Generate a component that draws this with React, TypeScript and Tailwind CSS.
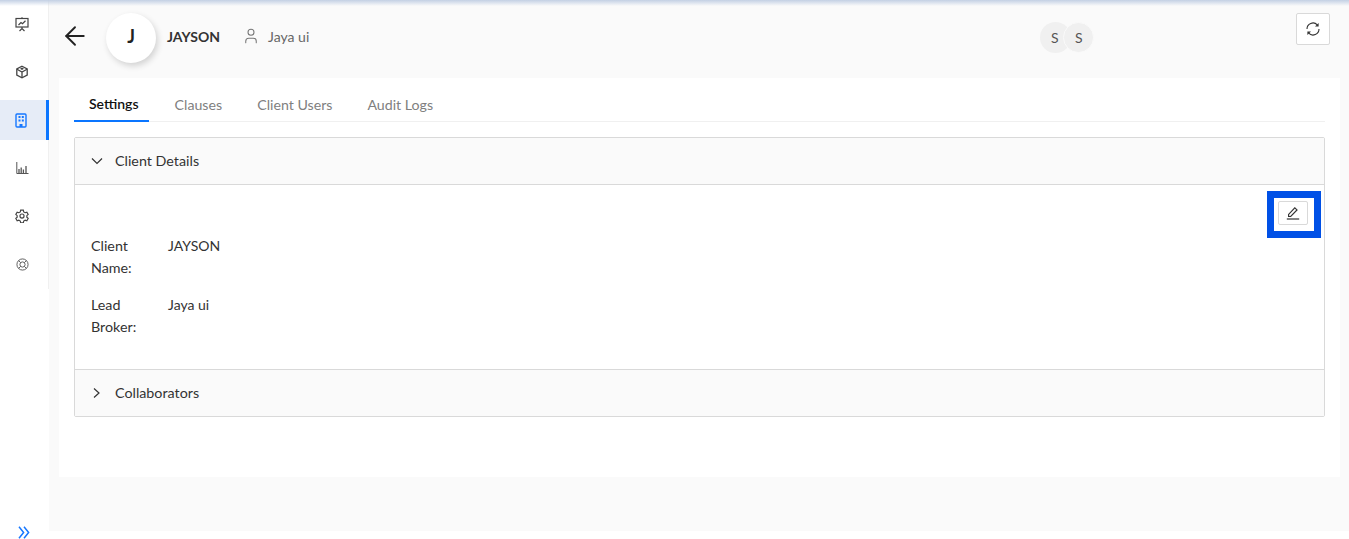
import React from "react";
import { ArrowLeft, User } from "lucide-react";

const PresentationIcon = () => (
  <svg width="14" height="15" viewBox="0 0 14 15" fill="none" stroke="#444" strokeWidth="1.2">
    <rect x="1" y="1.5" width="12" height="8.5" />
    <path d="M3.5 8 6 5.5l1.5 1.2L10.5 3.8" />
    <path d="M7 .2v1.3M7 10v1.5M4.5 14 7 11.5 9.5 14" />
  </svg>
);

const BoxIcon = () => (
  <svg width="14" height="14" viewBox="0 0 14 14" fill="none" stroke="#444" strokeWidth="1.3">
    <path d="M7 1.2 12.2 4v6L7 12.8 1.8 10V4Z" />
    <path d="M2 4.2 7 7l5-2.8M7 7v5.6" />
    <path d="M5 3.8 7 2.6l2 1.2L7 5Z" fill="#444" stroke="none" />
  </svg>
);

const BuildingIcon = () => (
  <svg width="12" height="15" viewBox="0 0 12 15" fill="none">
    <rect x="1" y="1" width="10" height="13" rx="1" stroke="#1677ff" strokeWidth="1.4" fill="#e6ecf7" />
    <path d="M3.5 3h2v2h-2zM6.8 3h2v2h-2zM3.5 6.5h2v2h-2zM6.8 6.5h2v2h-2zM4.5 14v-3h3v3z" fill="#1677ff" />
  </svg>
);

const ChartIcon = () => (
  <svg width="13" height="14" viewBox="0 0 13 14" fill="none" stroke="#555" strokeWidth="1">
    <path d="M.8 1v11.5h11.7" />
    <path d="M3 12V8M5.2 12V6.5M7.4 12V8.5M10 12V5" strokeWidth="1.3" />
  </svg>
);

const GearIcon = () => (
  <svg width="14" height="14" viewBox="0 0 24 24" fill="none" stroke="#444" strokeWidth="2">
    <path d="M9.7 2h4.6l.6 3 2.5 1.4 2.9-1 2.3 4-2.3 2v2.8l2.3 2-2.3 4-2.9-1-2.5 1.4-.6 3H9.7l-.6-3-2.5-1.4-2.9 1-2.3-4 2.3-2v-2.8l-2.3-2 2.3-4 2.9 1L9.1 5Z" />
    <circle cx="12" cy="12" r="3.5" />
  </svg>
);

const LifebuoyIcon = () => (
  <svg width="13" height="13" viewBox="0 0 14 14" fill="none" stroke="#555" strokeWidth="1">
    <circle cx="7" cy="7" r="6" />
    <circle cx="7" cy="7" r="2.8" />
    <path d="m2.8 2.8 2.2 2.2M9 9l2.2 2.2M11.2 2.8 9 5M5 9l-2.2 2.2" />
  </svg>
);

const navItems = [
  { icon: <PresentationIcon />, active: false },
  { icon: <BoxIcon />, active: false },
  { icon: <BuildingIcon />, active: true },
  { icon: <ChartIcon />, active: false },
  { icon: <GearIcon />, active: false },
  { icon: <LifebuoyIcon />, active: false },
];

const tabs = ["Settings", "Clauses", "Client Users", "Audit Logs"];

const details = [
  { label: "Client Name:", value: "JAYSON" },
  { label: "Lead Broker:", value: "Jaya ui" },
];

export default function App() {
  return (
    <div className="relative flex h-[539px] w-[1349px] overflow-hidden bg-white font-['Lato',sans-serif] text-[14.3px] text-[#333]">
      <div className="absolute inset-x-0 top-0 z-10 h-[6px] bg-gradient-to-b from-[#c3d0e4] to-transparent" />

      <aside className="flex w-[49px] shrink-0 flex-col">
        <div className="flex h-[289px] flex-col border-r border-[#f0f0f0] pt-[4px]">
          {navItems.map((item, i) => (
            <div
              key={i}
              className={`flex h-[40px] shrink-0 items-center justify-center [&:not(:first-child)]:mt-[8px] ${
                item.active ? "-mr-px border-r-[3px] border-[#0a75ff] bg-[#e6ecf7] pr-[5px]" : "pr-[4px]"
              }`}
            >
              {item.icon}
            </div>
          ))}
        </div>
        <div className="mt-auto flex justify-center pr-[1px]">
          <svg width="12" height="13" viewBox="0 0 12 13" fill="none" stroke="#1677ff" strokeWidth="1.5">
            <path d="M1 .8l4.6 5.7L1 12.2M6 .8l4.6 5.7L6 12.2" />
          </svg>
        </div>
      </aside>

      <main className="mb-[8px] flex h-[531px] flex-1 flex-col bg-[#fafafa] pl-[10px] pr-[9px]">
        <header className="flex h-[78px] shrink-0 items-center pb-[2px]">
          <ArrowLeft size={30} strokeWidth={1.5} className="mb-[4px] ml-[1px] text-[#222]" />
          <div className="ml-[16px] flex h-[50px] w-[50px] items-center justify-center rounded-full bg-white pb-[3px] text-[18px] font-bold text-[#222] shadow-[2px_3px_6px_rgba(0,0,0,0.16)]">
            J
          </div>
          <span className="mb-[4px] ml-[11px] text-[14px] font-bold text-[#333]">JAYSON</span>
          <User size={18} strokeWidth={1.4} className="mb-[4px] ml-[22px] text-[#777]" />
          <span className="mb-[4px] ml-[8px] text-[14px] text-[#666]">Jaya ui</span>
          <div className="mb-[1px] ml-[731px] flex">
            <span className="flex h-[31px] w-[31px] items-center justify-center rounded-full bg-[#f0f0f0] pr-[2px] text-[14px] text-[#555]">S</span>
            <span className="-ml-[8px] flex h-[31px] w-[31px] items-center justify-center rounded-full border border-[#fafafa] bg-[#f0f0f0] text-[14px] text-[#555]">S</span>
          </div>
          <button className="mb-[18px] ml-auto mr-[10px] flex h-[32px] w-[34px] items-center justify-center rounded-[2px] border border-[#d9d9d9] bg-white">
            <svg width="14" height="14" viewBox="0 0 14 14" fill="none" stroke="#333" strokeWidth="1.1">
              <path d="M1 7a6 6 0 0 1 10.3-4.2" />
              <path d="M13 7a6 6 0 0 1-10.3 4.2" />
              <path d="M12.6.9v3.6H9Z" fill="#333" stroke="none" />
              <path d="M1.4 13.1V9.5H5Z" fill="#333" stroke="none" />
            </svg>
          </button>
        </header>

        <section className="h-[399px] bg-white px-[15px] pt-[11px]">
          <div className="flex h-[33px] gap-[11px] border-b border-[#f0f0f0]">
            {tabs.map((tab, i) => (
              <div
                key={tab}
                className={`-mb-px flex h-[33px] items-center pb-[2px] pl-[15px] ${
                  i === 0
                    ? "border-b-2 border-[#0a75ff] pr-[10px] text-[14px] font-semibold text-[#111]"
                    : "pr-[9px] text-[14.2px] text-[#808080]"
                }`}
              >
                {tab}
              </div>
            ))}
          </div>

          <div className="mt-[15px] rounded-[2px] border border-[#d9d9d9]">
            <div className="flex h-[47px] items-center border-b border-[#d9d9d9] bg-[#fafafa] pb-[1px] pl-[16px]">
              <svg width="12" height="12" viewBox="0 0 12 12" fill="none" stroke="#333" strokeWidth="1.2">
                <path d="M1 3.5 6 8.5l5-5" />
              </svg>
              <span className="ml-[12px] text-[#333]">Client Details</span>
            </div>
            <div className="relative h-[184px] pl-[16px] pt-[50px]">
              <button className="absolute right-[3px] top-[6px] box-border flex h-[47px] w-[54px] items-center justify-center border-[7px] border-[#0050e6] bg-white">
                <span className="mb-[3px] mr-[3px] flex h-[24px] w-[30px] items-center justify-center rounded-[2px] border border-[#d9d9d9] bg-white">
                  <svg width="14" height="14" viewBox="0 0 14 14" fill="none" stroke="#333" strokeWidth="1.2">
                    <path d="M2.6 10.5V8.4l6.2-6.6 2.2 2.1-6.3 6.6Z" />
                    <path d="M.8 13h12.4" />
                  </svg>
                </span>
              </button>
              {details.map((d) => (
                <div key={d.label} className="mb-[15px] flex leading-[22px]">
                  <div className="w-[51px] text-[#333]">{d.label}</div>
                  <div className="ml-[26px] text-[14px] text-[#333]">{d.value}</div>
                </div>
              ))}
            </div>
            <div className="flex h-[47px] items-center border-t border-[#d9d9d9] bg-[#fafafa] pb-[1px] pl-[16px]">
              <svg width="12" height="12" viewBox="0 0 12 12" fill="none" stroke="#333" strokeWidth="1.2">
                <path d="M3 1.5 8 6l-5 4.5" />
              </svg>
              <span className="ml-[12px] text-[#333]">Collaborators</span>
            </div>
          </div>
        </section>
      </main>
    </div>
  );
}
